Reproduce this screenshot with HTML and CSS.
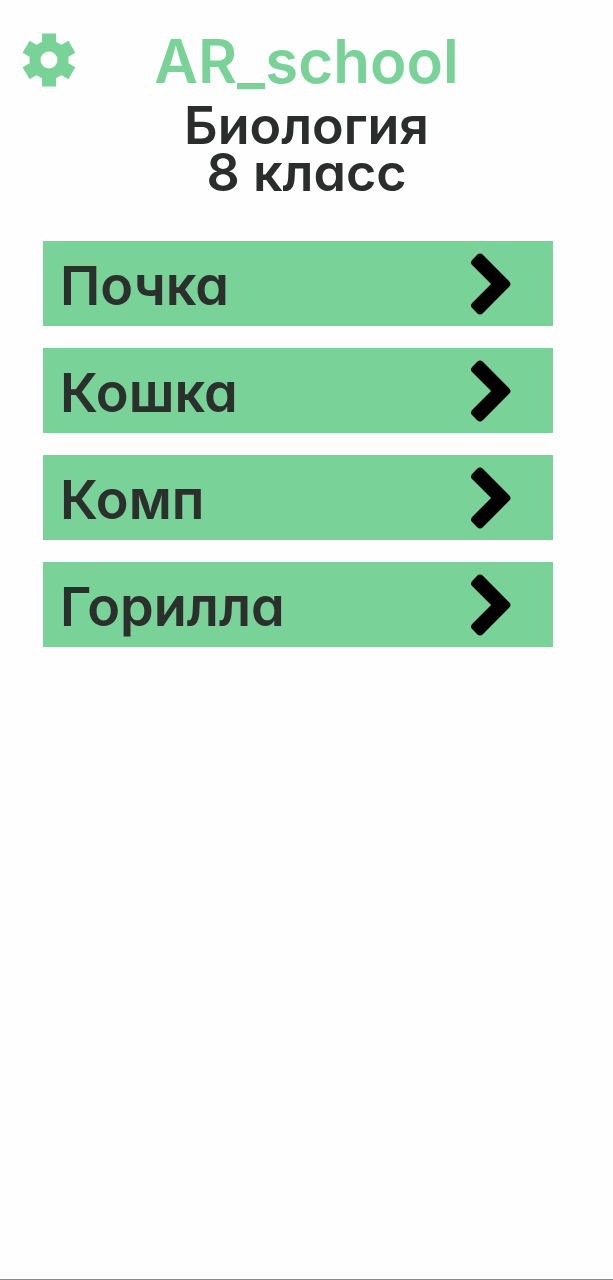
FILE: index.html
```
<!DOCTYPE html>
<html lang="ru">
<head>
<meta charset="utf-8">
<meta name="viewport" content="width=device-width, initial-scale=1">
<title>AR_school</title>
<link rel="stylesheet" href="styles.css">
</head>
<body>
<svg class="symbols" aria-hidden="true">
  <symbol id="chevron" viewBox="0 0 40 62">
    <path d="M9 4.7 35.3 31 9 57.3 4.2 52.5 25.7 31 4.2 9.5Z" fill="currentColor" stroke="currentColor" stroke-width="8" stroke-linejoin="round"/>
  </symbol>
</svg>
<div class="screen">
  <header class="header">
    <button class="settings" type="button" aria-label="Настройки">
      <svg class="gear" viewBox="-27 -27 54 54" fill="none" stroke="currentColor">
        <circle r="14" stroke-width="11"/>
        <path d="M0-16V-26.500M0 16V26.500M13.900-8 22.900-13.200M-13.900 8-22.900 13.200M-13.900-8-22.900-13.200M13.900 8 22.900 13.200" stroke-width="14"/>
      </svg>
    </button>
    <h1 class="title">AR_school</h1>
  </header>
  <h2 class="subject">Биология<br>8 класс</h2>
  <main class="list">
    <button class="item" type="button"><span class="label">Почка</span><svg class="arrow" aria-hidden="true"><use href="#chevron"/></svg></button>
    <button class="item" type="button"><span class="label">Кошка</span><svg class="arrow" aria-hidden="true"><use href="#chevron"/></svg></button>
    <button class="item" type="button"><span class="label">Комп</span><svg class="arrow" aria-hidden="true"><use href="#chevron"/></svg></button>
    <button class="item" type="button"><span class="label">Горилла</span><svg class="arrow" aria-hidden="true"><use href="#chevron"/></svg></button>
  </main>
</div>
</body>
</html>
```
FILE: styles.css
```
* {
  box-sizing: border-box;
}

body {
  margin: 0;
  background: #fefefe;
  color: #2b2d2d;
  font-family: Inter, "Open Sans", sans-serif;
  font-weight: 600;
  font-feature-settings: "cv11";
}

.symbols {
  display: none;
}

.screen {
  min-height: 100vh;
  padding-top: 24px;
  border-bottom: 1px solid #8a8a8a;
}

.header {
  display: grid;
  grid-template-columns: 54px 1fr 54px;
  align-items: center;
  padding: 0 22px;
  color: #79d297;
}

.settings {
  padding: 0;
  border: 0;
  background: none;
  color: inherit;
  line-height: 0;
}

.gear {
  width: 54px;
  height: 54px;
}

.title {
  margin: 0;
  padding-top: 2px;
  font-size: 60px;
  font-weight: 600;
  line-height: 70px;
  text-align: center;
}

.subject {
  margin: 6px 0 0;
  font-size: 52px;
  font-weight: 600;
  line-height: 47px;
  text-align: center;
}

.list {
  display: grid;
  gap: 22px;
  padding: 45px 60px 0 43px;
}

.item {
  display: flex;
  align-items: center;
  justify-content: space-between;
  height: 85px;
  padding: 0 42px 0 17px;
  border: 0;
  background: #79d297;
  color: #2b302d;
  font: inherit;
  font-feature-settings: inherit;
  font-size: 54px;
  line-height: 64px;
}

.label {
  padding-top: 4px;
}

.arrow {
  width: 40px;
  height: 62px;
  color: #000;
}
```
